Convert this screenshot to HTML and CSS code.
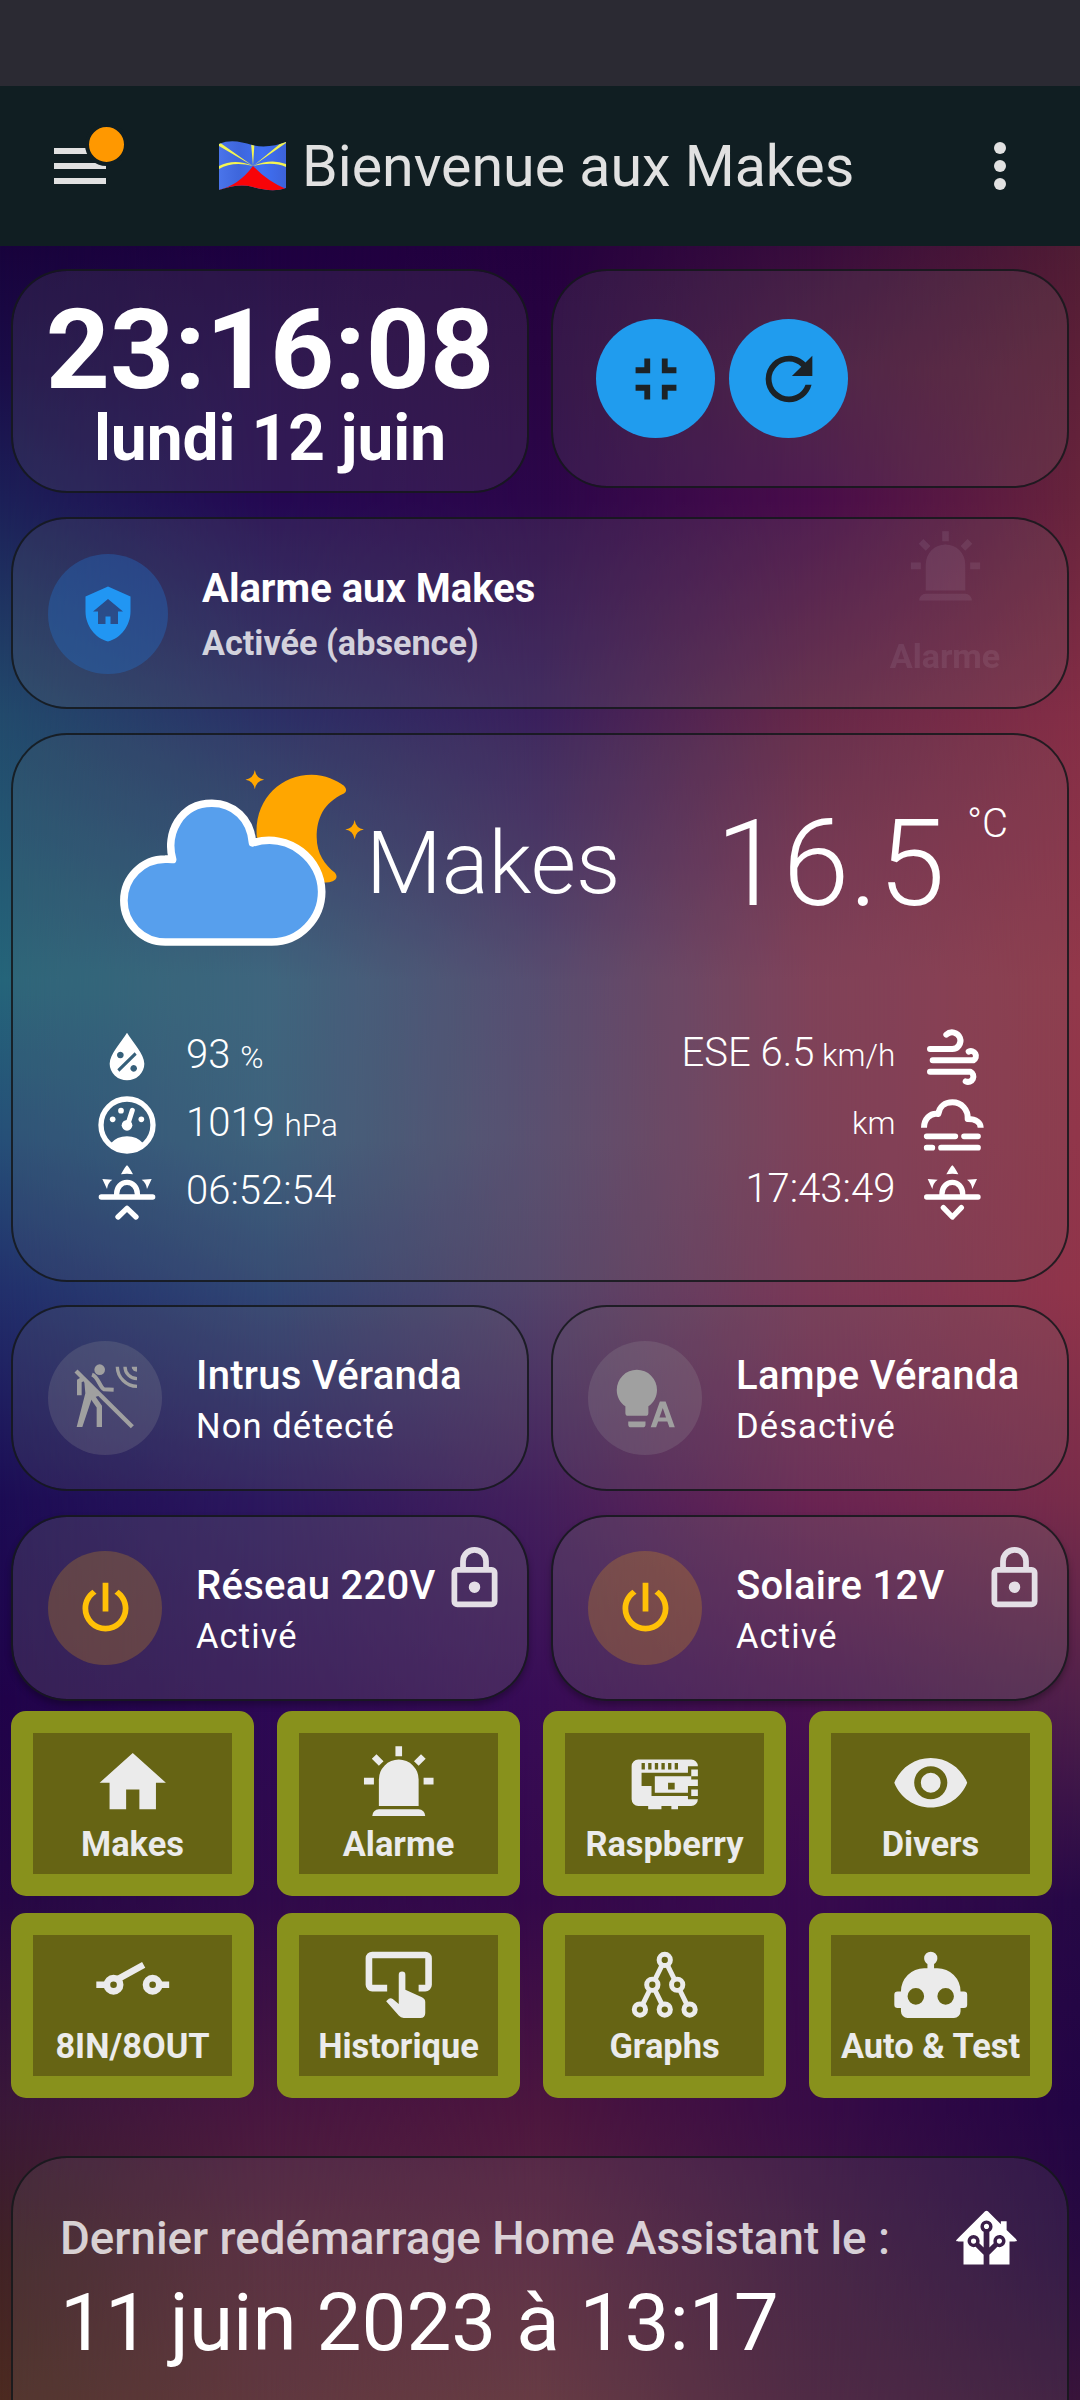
FILE: index.html
```html
<!DOCTYPE html>
<html lang="fr">
<head>
<meta charset="utf-8">
<title>Bienvenue aux Makes</title>
<link rel="stylesheet" href="styles.css">
</head>
<body>
<div class="wallpaper"><i class="w0"></i><i class="w1"></i><i class="w2"></i><i class="w3"></i><i class="w4"></i></div>
<div class="statusbar"></div>
<header class="header">
  <div class="menu"><span></span><span></span><span></span><b class="badge"></b></div>
  <h1 class="title">
    <svg class="flag" viewBox="0 0 67 50">
      <defs><clipPath id="fl"><path d="M0 3C12-2 22 1 33 4S57 5 67 1V47C56 51 45 49 34 46S12 45 0 49Z"/></clipPath><linearGradient id="fb" x2="1"><stop stop-color="#4a74ea"/><stop offset=".3" stop-color="#3e66dc"/><stop offset=".65" stop-color="#3f70f4"/><stop offset="1" stop-color="#3c62da"/></linearGradient></defs>
      <g clip-path="url(#fl)"><path fill="url(#fb)" d="M0-2H67V52H0Z"/><path d="M0 49Q20 44 34 25Q48 40 67 48V52H0Z" fill="#f80408"/><g fill="#f4f552"><path d="M34 25L0 1V5ZM34 25L67 2V-1L62 2ZM34 25L32 2h3.500ZM34 25Q14 20 0 28V25Q16 17 34 25ZM34 25Q54 20 67 26V23Q52 17 34 25Z"/></g></g>
    </svg>
    <span>Bienvenue aux Makes</span>
  </h1>
  <div class="dots"><i></i><i></i><i></i></div>
</header>

<main class="main">
  <section class="row top">
    <div class="card clock"><div class="time">23:16:08</div><div class="date">lundi 12 juin</div></div>
    <div class="card actions">
      <span class="round"><svg viewBox="0 0 24 24"><path d="M14,14H19V16H16V19H14V14M5,14H10V19H8V16H5V14M8,5H10V10H5V8H8V5M19,8V10H14V5H16V8H19Z"/></svg></span>
      <span class="round"><svg viewBox="0 0 24 24"><path d="M17.65,6.35C16.2,4.9 14.21,4 12,4A8,8 0 0,0 4,12A8,8 0 0,0 12,20C15.73,20 18.84,17.45 19.73,14H17.65C16.83,16.33 14.61,18 12,18A6,6 0 0,1 6,12A6,6 0 0,1 12,6C13.66,6 15.14,6.69 16.22,7.78L13,11H20V4L17.65,6.35Z"/></svg></span>
    </div>
  </section>

  <section class="card alarm">
    <span class="disc blue"><svg viewBox="0 0 24 24"><path d="M11,13H13V16H16V11H18L12,6L6,11H8V16H11V13M12,1L21,5V11C21,16.55 17.16,21.74 12,23C6.84,21.74 3,16.55 3,11V5L12,1Z"/></svg></span>
    <div class="alarm-text"><div class="alarm-name">Alarme aux Makes</div><div class="alarm-state">Activée (absence)</div></div>
    <div class="ghost"><svg viewBox="0 0 24 24"><path d="M6,6.9L3.87,4.78L5.28,3.37L7.4,5.5L6,6.9M13,1V4H11V1H13M20.13,4.78L18,6.9L16.6,5.5L18.72,3.37L20.13,4.78M4.5,10.5V12.5H1.5V10.5H4.5M19.5,10.5H22.5V12.5H19.5V10.5M6,20H18A2,2 0 0,1 20,22H4A2,2 0 0,1 6,20M12,5A6,6 0 0,1 18,11V19H6V11A6,6 0 0,1 12,5Z"/></svg><span>Alarme</span></div>
  </section>

  <section class="card weather">
    <div class="now">
      <svg class="sky" viewBox="90 50 740 550">
        <g fill="#ffa600"><path d="M500 262C490 150 570 73 665 73C705 73 740 90 762 106Q775 120 762 130C700 158 680 205 680 262C680 310 705 345 735 368Q747 385 728 393Q715 399 700 397L600 300Z"/><path d="M494 59Q498 84 522 88Q498 92 494 117Q490 92 466 88Q490 84 494 59ZM794 209Q798 234 822 238Q798 242 794 267Q790 242 766 238Q790 234 794 209Z"/></g>
        <path d="M225 576A124 124 0 0 1 225 327Q236 326 247 328C225 250 270 159 365 159C430 159 482 205 487 278C600 245 695 330 695 425C695 505 630 576 545 576Z" fill="#579fed" stroke="#fff" stroke-width="23" stroke-linejoin="round"/>
      </svg>
      <span class="place">Makes</span>
      <span class="temp">16.5</span><span class="deg">°C</span>
    </div>
    <div class="details">
      <div class="col left">
        <div class="item"><svg viewBox="52 50 180 180"><path fill-rule="evenodd" d="M142 67C158 95 194 130 194 160A52 50 0 0 1 90 160C90 130 126 95 142 67ZM122 124a10 10 0 1 0 .1 0ZM162 164a10 10 0 1 0 .1 0ZM165 126L113 177L119 184L171 133Z"/></svg><span>93 <small>%</small></span></div>
        <div class="item"><svg viewBox="52 256 180 180"><circle cx="142" cy="346" r="78" class="ln" stroke-width="16"/><path d="M92 402Q112 380 142 380T192 402Q170 424 142 424T92 402Z"/><circle cx="142" cy="347" r="16"/><circle cx="99" cy="329" r="8.500"/><circle cx="124" cy="303" r="8.500"/><circle cx="185" cy="329" r="8.500"/><path d="M144 345L158 302" class="ln" stroke-width="15"/></svg><span>1019 <small>hPa</small></span></div>
        <div class="item"><svg viewBox="52 460 180 180"><path d="M142 467Q146 468 160 494Q142 490 124 494Q138 468 142 467ZM68 508L98 510Q84 520 82 538ZM216 508L186 510Q200 520 202 538Z"/><path class="ln" stroke-width="16" d="M65 562H219M111 560V552A31 34 0 0 1 173 552V560"/><path class="ln" stroke-width="16" d="M115 622L142 596L169 622"/></svg><span>06:52:54</span></div>
      </div>
      <div class="col right">
        <div class="item"><span>ESE 6.5<small> km/h</small></span><svg viewBox="417 50 200 180"><path class="ln" stroke-width="18" d="M450 116H515A25 25 0 1 0 499 73M458 150H580A14 14 0 1 0 566 124M450 184H571A16 16 0 1 1 557 213"/></svg></div>
        <div class="item"><span><small>km</small></span><svg viewBox="417 256 200 180"><path class="ln butt" stroke-width="18" d="M432 354C432 330 450 308 475 313C478 290 495 278 517 278C545 278 565 300 563 328C590 328 602 340 602 354"/><path class="ln" stroke-width="17" d="M440 380H526M552 380H594M440 414H457M483 414H594"/></svg></div>
        <div class="item"><span>17:43:49</span><svg viewBox="417 460 200 180"><g transform="translate(375 0)"><path d="M142 467Q146 468 160 494Q142 490 124 494Q138 468 142 467ZM68 508L98 510Q84 520 82 538ZM216 508L186 510Q200 520 202 538Z"/><path class="ln" stroke-width="16" d="M65 562H219M111 560V552A31 34 0 0 1 173 552V560M115 594L142 622L169 594"/></g></svg></div>
      </div>
    </div>
  </section>

  <section class="row">
    <div class="card entity"><span class="disc grey"><svg class="full" viewBox="24 21 342 342"><g stroke="#a0a0a0" fill="none" stroke-width="10"><circle cx="179" cy="107" r="16" fill="#a0a0a0" stroke="none"/><path stroke-width="13" d="M108 111L277 278"/><path stroke-width="14" d="M118 184V141L132 133"/><path d="M156 122C174 128 180 160 192 166L221 167" stroke-width="12"/><path d="M132 132L182 184L156 192L127 279H110L136 178Z" fill="#a0a0a0" stroke="none"/><path d="M154 184L178 218V279" stroke-width="16"/><path d="M232 98A60 60 0 0 0 291 157M255 98A36 36 0 0 0 291 134" stroke-width="10"/><path d="M275 98H291V113A16 16 0 0 1 275 98Z" fill="#a0a0a0" stroke="none"/></g></svg></span><div class="txt"><div class="name">Intrus Véranda</div><div class="state">Non détecté</div></div></div>
    <div class="card entity"><span class="disc grey"><svg viewBox="0 0 24 24"><path d="M9,2A7,7 0 0,0 2,9C2,11.4 3.2,13.5 5,14.7V17A1,1 0 0,0 6,18H12A1,1 0 0,0 13,17V14.7C14.8,13.5 16,11.4 16,9A7,7 0 0,0 9,2M6,20H12V21A1,1 0 0,1 11,22H7A1,1 0 0,1 6,21ZM17,13H19L22.2,22H20.3L19.6,20H16.4L15.7,22H13.8ZM18,15.300L16.850,18.650H19.150Z" fill-rule="evenodd"/></svg></span><div class="txt"><div class="name">Lampe Véranda</div><div class="state">Désactivé</div></div></div>
  </section>

  <section class="row power">
    <div class="card entity"><span class="disc amber"><svg viewBox="0 0 24 24"><path d="M16.56,5.44L15.11,6.89C16.84,7.94 18,9.83 18,12A6,6 0 0,1 12,18A6,6 0 0,1 6,12C6,9.83 7.16,7.94 8.88,6.88L7.44,5.44C5.36,6.88 4,9.28 4,12A8,8 0 0,0 12,20A8,8 0 0,0 20,12C20,9.28 18.64,6.88 16.56,5.44M13,3H11V13H13"/></svg></span><div class="txt"><div class="name">Réseau 220V</div><div class="state">Activé</div></div>
      <svg class="lock" viewBox="0 0 24 24"><path d="M12,17A2,2 0 0,1 10,15A2,2 0 0,1 12,13A2,2 0 0,1 14,15A2,2 0 0,1 12,17M18,20V10H6V20H18M18,8A2,2 0 0,1 20,10V20A2,2 0 0,1 18,22H6A2,2 0 0,1 4,20V10A2,2 0 0,1 6,8H7V6A5,5 0 0,1 17,6V8H18M12,3A3,3 0 0,0 9,6V8H15V6A3,3 0 0,0 12,3Z"/></svg></div>
    <div class="card entity"><span class="disc amber"><svg viewBox="0 0 24 24"><path d="M16.56,5.44L15.11,6.89C16.84,7.94 18,9.83 18,12A6,6 0 0,1 12,18A6,6 0 0,1 6,12C6,9.83 7.16,7.94 8.88,6.88L7.44,5.44C5.36,6.88 4,9.28 4,12A8,8 0 0,0 12,20A8,8 0 0,0 20,12C20,9.28 18.64,6.88 16.56,5.44M13,3H11V13H13"/></svg></span><div class="txt"><div class="name">Solaire 12V</div><div class="state">Activé</div></div>
      <svg class="lock" viewBox="0 0 24 24"><path d="M12,17A2,2 0 0,1 10,15A2,2 0 0,1 12,13A2,2 0 0,1 14,15A2,2 0 0,1 12,17M18,20V10H6V20H18M18,8A2,2 0 0,1 20,10V20A2,2 0 0,1 18,22H6A2,2 0 0,1 4,20V10A2,2 0 0,1 6,8H7V6A5,5 0 0,1 17,6V8H18M12,3A3,3 0 0,0 9,6V8H15V6A3,3 0 0,0 12,3Z"/></svg></div>
  </section>

  <nav class="tiles">
    <a class="tile"><svg viewBox="0 0 24 24"><path d="M10,20V14H14V20H19V12H22L12,3L2,12H5V20H10Z"/></svg><span>Makes</span></a>
    <a class="tile"><svg viewBox="0 0 24 24"><path d="M6,6.9L3.87,4.78L5.28,3.37L7.4,5.5L6,6.9M13,1V4H11V1H13M20.13,4.78L18,6.9L16.6,5.5L18.72,3.37L20.13,4.78M4.5,10.5V12.5H1.5V10.5H4.5M19.5,10.5H22.5V12.5H19.5V10.5M6,20H18A2,2 0 0,1 20,22H4A2,2 0 0,1 6,20M12,5A6,6 0 0,1 18,11V19H6V11A6,6 0 0,1 12,5Z"/></svg><span>Alarme</span></a>
    <a class="tile"><svg viewBox="0 0 24 24"><path fill-rule="evenodd" d="M4 5H20A2 2 0 0 1 22 7H19V10H20V11H22V13H19V17H22A2 2 0 0 1 20 19H16V20H14V19H11V20H7V19H4A2 2 0 0 1 2 17V7A2 2 0 0 1 4 5ZM5 6V8H6V6ZM7 6V8H8V6ZM9 6V8H10V6ZM11 6V8H12V6ZM13 6V8H14V6ZM15 6V8H16V6ZM5 9V13H8V16H19V15H9V10H19V9ZM13 12V14H15V12ZM20 8H22V10H20ZM20 14H22V16H20Z"/></svg><span>Raspberry</span></a>
    <a class="tile"><svg viewBox="0 0 24 24"><path d="M12,9A3,3 0 0,0 9,12A3,3 0 0,0 12,15A3,3 0 0,0 15,12A3,3 0 0,0 12,9M12,17A5,5 0 0,1 7,12A5,5 0 0,1 12,7A5,5 0 0,1 17,12A5,5 0 0,1 12,17M12,4.5C7,4.5 2.73,7.61 1,12C2.73,16.39 7,19.5 12,19.5C17,19.5 21.27,16.39 23,12C21.27,7.61 17,4.5 12,4.5Z"/></svg><span>Divers</span></a>
    <a class="tile"><svg viewBox="0 0 24 24"><g fill="none" stroke="#ebebeb" stroke-width="2"><circle cx="6.200" cy="12" r="2"/><circle cx="18" cy="12" r="2"/><path d="M1 12H4.200M20 12H23M7.500 10.300L15.300 6"/></g></svg><span>8IN/8OUT</span></a>
    <a class="tile"><svg viewBox="0 0 24 24"><path fill="none" stroke="#ebebeb" stroke-width="2" d="M8.500 13H4A1 1 0 0 1 3 12V4A1 1 0 0 1 4 3H20A1 1 0 0 1 21 4V12A1 1 0 0 1 20 13H18"/><path d="M13 8A1 1 0 0 1 14 9V13.500L19 15.800Q20 16.300 20 17.200V20.500Q20 22 18.500 22H13.500Q12.600 22 12 21.300L8.200 17L9 16.200Q9.600 15.900 10.200 16.300L12 17.800V9A1 1 0 0 1 13 8Z"/></svg><span>Historique</span></a>
    <a class="tile"><svg viewBox="0 0 24 24"><g fill="none" stroke="#ebebeb" stroke-width="1.500"><circle cx="12" cy="4.500" r="1.700"/><circle cx="8.250" cy="12" r="1.700"/><circle cx="15.750" cy="12" r="1.700"/><circle cx="4.500" cy="19.500" r="1.700"/><circle cx="12" cy="19.500" r="1.700"/><circle cx="19.500" cy="19.500" r="1.700"/><path d="M11.200 6.100L9 10.500M12.800 6.100L15 10.500M7.500 13.500L5.300 18M9 13.500L11.200 18M16.500 13.500L18.700 18"/></g></svg><span>Graphs</span></a>
    <a class="tile"><svg viewBox="0 0 24 24"><path d="M12,2A2,2 0 0,1 14,4C14,4.74 13.6,5.39 13,5.73V7H14A7,7 0 0,1 21,14H22A1,1 0 0,1 23,15V18A1,1 0 0,1 22,19H21V20A2,2 0 0,1 19,22H5A2,2 0 0,1 3,20V19H2A1,1 0 0,1 1,18V15A1,1 0 0,1 2,14H3A7,7 0 0,1 10,7H11V5.73C10.4,5.39 10,4.74 10,4A2,2 0 0,1 12,2M7.5,13A2.5,2.5 0 0,0 5,15.500A2.500,2.500 0 0,0 7.500,18A2.500,2.500 0 0,0 10,15.500A2.500,2.500 0 0,0 7.500,13M16.500,13A2.500,2.500 0 0,0 14,15.500A2.500,2.500 0 0,0 16.500,18A2.500,2.500 0 0,0 19,15.500A2.500,2.500 0 0,0 16.500,13Z"/></svg><span>Auto &amp; Test</span></a>
  </nav>

  <section class="card restart">
    <div class="restart-head"><span>Dernier redémarrage Home Assistant le :</span>
      <svg viewBox="0 0 24 24"><path d="M21.8,13H20V21H13V17.67L15.79,14.88L16.5,15C17.66,15 18.6,14.06 18.6,12.9C18.6,11.74 17.66,10.8 16.5,10.8A2.1,2.1 0 0,0 14.4,12.9L14.5,13.61L13,15.13V9.65C13.66,9.29 14.1,8.6 14.1,7.8A2.1,2.1 0 0,0 12,5.7A2.1,2.1 0 0,0 9.9,7.8C9.9,8.6 10.34,9.29 11,9.65V15.13L9.5,13.61L9.6,12.9A2.1,2.1 0 0,0 7.5,10.8A2.1,2.1 0 0,0 5.4,12.9A2.1,2.1 0 0,0 7.5,15L8.21,14.88L11,17.67V21H4V13H2.25C1.83,13 1.42,13 1.42,12.79C1.43,12.57 1.85,12.15 2.28,11.72L11,3C11.33,2.67 11.67,2.33 12,2.33C12.33,2.33 12.67,2.67 13,3L17,7V6H19V9L21.78,11.78C22.18,12.18 22.59,12.59 22.6,12.8C22.6,13 22.2,13 21.8,13M7.5,12A0.9,0.9 0 0,1 8.4,12.9A0.9,0.9 0 0,1 7.5,13.8A0.9,0.9 0 0,1 6.6,12.9A0.9,0.9 0 0,1 7.5,12M16.5,12C17,12 17.4,12.4 17.4,12.9C17.4,13.4 17,13.8 16.5,13.8A0.9,0.9 0 0,1 15.6,12.9A0.9,0.9 0 0,1 16.5,12M12,6.9C12.5,6.9 12.9,7.3 12.9,7.8C12.9,8.3 12.5,8.7 12,8.7C11.5,8.7 11.1,8.3 11.1,7.8C11.1,7.3 11.5,6.9 12,6.9Z"/></svg></div>
    <div class="restart-date">11 juin 2023 à 13:17</div>
  </section>
</main>
</body>
</html>
```
FILE: styles.css
```css
* { box-sizing: border-box; }
html, body { margin: 0; height: 2400px; overflow: hidden; }
body {
  position: relative;
  width: 1080px;
  background: #24003e;
  color: #fff;
  font-family: Roboto, "Liberation Sans", sans-serif;
}
svg { display: block; flex: none; fill: currentColor; overflow: visible; }

/* Wallpaper: five vertical gradients, each faded in over the one before */
.wallpaper { position: absolute; inset: 0; z-index: -1; }
.wallpaper i { position: absolute; inset: 0; }
.w0 { background: linear-gradient(#18033c 245px, #1a0d48 370px, #1c2058 500px, #224a6c 715px, #25657a 980px, #264f78 1140px, #22306c 1290px, #1c0c54 1500px, #20034a 1700px, #260844 1900px, #3a1838 2110px, #402226 2250px, #4c2a20 2400px); }
.w1 { background: linear-gradient(#1e0040 245px, #22084a 370px, #240852 500px, #2c3066 715px, #324a72 850px, #386480 980px, #38607e 1140px, #304674 1290px, #2c185e 1500px, #2c0854 1700px, #300a4a 1900px, #481640 2110px, #56253a 2250px, #5c2c34 2400px); -webkit-mask: linear-gradient(90deg, transparent 0, #000 270px); mask: linear-gradient(90deg, transparent 0, #000 270px); }
.w2 { background: linear-gradient(#24003e 245px, #280442 370px, #2c064a 500px, #3a205c 715px, #463064 850px, #544870 980px, #584c70 1140px, #54446a 1290px, #44205c 1500px, #380c56 1700px, #34084a 1900px, #4c163e 2110px, #5a2440 2250px, #64303a 2400px); -webkit-mask: linear-gradient(90deg, transparent 270px, #000 540px); mask: linear-gradient(90deg, transparent 270px, #000 540px); }
.w3 { background: linear-gradient(#380c3c 245px, #481640 370px, #480c4a 500px, #662848 715px, #763250 850px, #823c56 980px, #803c56 1140px, #7a3856 1290px, #6a2452 1500px, #481050 1700px, #380a4e 1900px, #380c46 2110px, #40183f 2250px, #481c3c 2400px); -webkit-mask: linear-gradient(90deg, transparent 540px, #000 810px); mask: linear-gradient(90deg, transparent 540px, #000 810px); }
.w4 { background: linear-gradient(#501c34 245px, #5e2038 370px, #68243c 500px, #842e46 715px, #92384a 980px, #90344a 1290px, #782c4a 1500px, #50204a 1700px, #260846 1900px, #220444 2110px, #280a40 2250px, #38143a 2400px); -webkit-mask: linear-gradient(90deg, transparent 810px, #000 1080px); mask: linear-gradient(90deg, transparent 810px, #000 1080px); }

.statusbar { height: 86px; background: #2b2a33; }
.header {
  height: 160px; padding: 0 74px 0 54px;
  display: flex; align-items: center;
  background: #101e22; color: #e1e1e1;
}
.menu { position: relative; width: 52px; display: flex; flex-direction: column; gap: 9px; }
.menu span { height: 6px; background: #e1e1e1; }
.badge { position: absolute; left: 31px; top: -25px; width: 43px; height: 43px; border: 4px solid #101e22; border-radius: 50%; background: #ff9800; }
.title { flex: 1; margin: 0 0 0 113px; display: flex; align-items: center; gap: 16px; font-size: 57.300px; font-weight: 400; white-space: nowrap; }
.flag { width: 67px; height: 50px; }
.dots { display: flex; flex-direction: column; gap: 6px; }
.dots i { width: 12px; height: 12px; border-radius: 50%; background: #e1e1e1; }

.main { padding: 23px 11px 0 11px; }
.row { display: grid; grid-template-columns: 518px 518px; column-gap: 22px; align-items: start; margin-bottom: 24px; }
.card {
  border: 2px solid rgba(22, 25, 29, .88);
  border-radius: 56px;
  background: rgba(118, 118, 118, .17);
  background-clip: padding-box;
}
.clock { height: 224px; padding-top: 25px; text-align: center; font-weight: 700; }
.time { font-size: 112px; line-height: 107px; }
.date { font-size: 64px; line-height: 71px; }
.actions { height: 219px; padding-left: 43px; display: flex; align-items: center; gap: 14px; }
.round { width: 119px; height: 119px; border-radius: 50%; background: #209cee; color: #1c2226; display: grid; place-items: center; }
.round svg { width: 70px; height: 70px; }

.alarm { height: 192px; display: flex; align-items: center; padding: 1px 22px 0 35px; }
.disc { flex: none; width: 114px; height: 114px; border-radius: 50%; display: grid; place-items: center; }
.disc svg { width: 69px; height: 69px; }
.disc .full { width: 114px; height: 114px; }
.blue { width: 120px; height: 120px; background: rgba(33, 110, 200, .38); color: #2196f3; }
.blue svg { width: 60px; height: 60px; }
.grey { background: rgba(158, 158, 158, .2); color: #a0a0a0; }
.amber { background: rgba(255, 180, 7, .21); color: #ffc107; }
.alarm-text { margin-left: 34px; padding-top: 3px; font-weight: 700; }
.alarm-name { font-size: 40px; line-height: 55px; }
.alarm-state { font-size: 34.200px; line-height: 54px; color: rgba(255, 255, 255, .78); }
.ghost { margin: 0 2px 24px auto; width: 196px; height: 148px; display: flex; flex-direction: column; align-items: center; justify-content: space-between; opacity: .08; color: #eef; }
.ghost svg { width: 79px; height: 79px; }
.ghost span { font-size: 34px; font-weight: 700; line-height: 40px; }

.weather { height: 549px; margin: 24px 0 23px; background: rgba(112, 112, 112, .12); background-clip: padding-box; }
.now { height: 292px; display: flex; align-items: flex-start; padding: 32px 0 0 107px; font-weight: 300; line-height: 1; }
.sky { width: 247px; height: 183px; margin-right: -1px; }
.place { font-size: 87.500px; margin-top: 53px; }
.temp { font-size: 120.500px; margin: 37px 0 0 auto; }
.deg { font-size: 40px; width: 85px; margin: 37px 37px 0 0; padding-left: 22px; }
.details { display: flex; justify-content: space-between; padding: 0 81px 0 84px; font-size: 40px; font-weight: 300; }
.col { display: flex; flex-direction: column; gap: 8px; }
.item { height: 60px; display: flex; align-items: center; white-space: nowrap; }
.item small { font-size: 31.500px; }
.item svg { height: 60px; width: 60px; }
.item span { padding-bottom: 5px; }
.left .item { gap: 29px; }
.right .item { justify-content: flex-end; gap: 24px; }
.right .item span { padding-bottom: 10px; }
.right .item svg { width: 66.700px; }
.ln { fill: none; stroke: #fff; stroke-linecap: round; stroke-linejoin: round; }
.butt { stroke-linecap: butt; }

.entity { position: relative; height: 186px; display: flex; align-items: center; padding-left: 35px; }
.txt { margin-left: 34px; padding-top: 6px; line-height: 50px; white-space: nowrap; }
.name { font-size: 40px; font-weight: 500; letter-spacing: .3px; }
.state { font-size: 34.500px; letter-spacing: 1.1px; }
.power { margin-bottom: 10px; }
.power .card { background: rgba(125, 125, 125, .24); background-clip: padding-box; box-shadow: 0 4px 6px rgba(0, 0, 0, .28); }
.lock { position: absolute; right: 18px; top: 27px; width: 69px; height: 69px; color: #e4dfe6; }

.tiles { display: grid; grid-template-columns: repeat(4, 243px); gap: 17px 23px; }
.tile {
  height: 185px; border: 22px solid #88911c; border-radius: 15px; background: #666414;
  background-clip: padding-box; color: #ebebeb;
  display: flex; flex-direction: column; align-items: center; padding-top: 10px;
}
.tile svg { width: 79.500px; height: 79.500px; }
.tile span { font-size: 34.400px; line-height: 40px; margin-top: 1px; font-weight: 700; white-space: nowrap; }

.restart { height: 300px; margin-top: 58px; padding: 48px 46px 0 47px; }
.restart-head { display: flex; justify-content: space-between; align-items: center; height: 64px; font-size: 45.700px; font-weight: 500; color: rgba(255, 255, 255, .78); white-space: nowrap; }
.restart-head svg { width: 69px; height: 69px; color: #fff; }
.restart-date { font-size: 80px; line-height: 107px; white-space: nowrap; }
```
